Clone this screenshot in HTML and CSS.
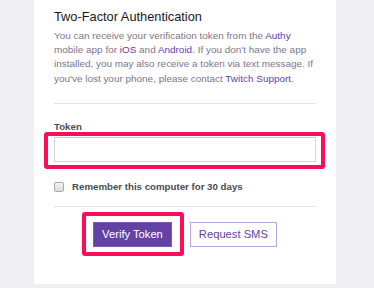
FILE: index.html
```html
<!DOCTYPE html>
<html lang="en">
<head>
    <meta charset="UTF-8">
    <meta name="viewport" content="width=device-width, initial-scale=1.0">
    <title>Two-Factor Authentication</title>
    <link rel="stylesheet" href="styles.css">
</head>
<body>
    <div class="card">
        <h2 class="title">Two-Factor Authentication</h2>
        <p class="intro">You can receive your verification token from the <a href="#">Authy</a> mobile app for <a href="#">iOS</a> and <a href="#">Android</a>. If you don't have the app installed, you may also receive a token via text message. If you've lost your phone, please contact <a href="#">Twitch Support</a>.</p>

        <hr class="divider">

        <label class="field-label" for="token">Token</label>
        <input type="text" id="token" class="token-input">

        <label class="remember">
            <input type="checkbox" class="check">
            <span>Remember this computer for 30 days</span>
        </label>

        <hr class="divider divider-bottom">

        <div class="actions">
            <button class="btn btn-primary">Verify Token</button>
            <button class="btn btn-secondary">Request SMS</button>
        </div>

        <!-- annotation boxes -->
        <div class="mark mark-input"></div>
        <div class="mark mark-verify"></div>
    </div>
</body>
</html>
```

FILE: styles.css
```css
body { margin: 0; background: #efeef1; font-family: "Liberation Sans", Arial, sans-serif; }
.card {
    position: relative;
    margin-left: 34px;
    width: 302px;
    box-sizing: border-box;
    padding: 9px 20px 37px;
    background: #fff;
}
.title {
    margin: 0;
    font-size: 12.8px;
    line-height: 16px;
    font-weight: normal;
    color: #19171c;
}
.intro {
    margin: 4px 0 0;
    font-size: 9.95px;
    line-height: 14.2px;
    color: #7d7689;
}
.intro a { color: #6441a4; text-decoration: none; }
.divider {
    margin: 17px 0 0;
    border: 0;
    border-top: 1px solid #e3e2e6;
}
.divider-bottom { margin-top: 13px; }
.field-label {
    display: block;
    margin-top: 17px;
    font-size: 9.7px;
    line-height: 12px;
    font-weight: bold;
    color: #4d4a52;
}
.token-input {
    display: block;
    margin: 4px 0 0;
    width: 100%;
    height: 25px;
    box-sizing: border-box;
    border: 1px solid #d6d6d8;
    border-top-color: #c8c8cb;
    padding: 0 6px;
    font: inherit;
}
.remember {
    display: flex;
    align-items: center;
    gap: 8px;
    margin-top: 19px;
    height: 12px;
    font-size: 9.7px;
    font-weight: bold;
    color: #4d4a52;
}
.check {
    appearance: none;
    margin: 0;
    width: 10px;
    height: 10px;
    border: 1px solid #a9a9ad;
    border-radius: 2px;
    background: linear-gradient(#f4f4f5, #dcdcdf);
}
.actions {
    display: flex;
    justify-content: center;
    gap: 18px;
    margin-top: 15px;
}
.btn {
    height: 25px;
    padding: 0 8px;
    font-family: "Liberation Sans", Arial, sans-serif;
    font-size: 11.2px;
    border-radius: 0;
    cursor: pointer;
}
.btn-primary { background: #6441a4; border: 1px solid #7a5cb3; color: #fff; }
.btn-secondary { background: #fff; border: 1px solid #b9a5de; color: #6441a4; }
.mark {
    position: absolute;
    box-sizing: border-box;
    border: 4px solid #fc0d57;
    border-radius: 3px;
}
.mark-input { left: 10px; top: 132px; width: 281px; height: 37px; }
.mark-verify { left: 48px; top: 212px; width: 102px; height: 44px; border-width: 4.5px; }
```
